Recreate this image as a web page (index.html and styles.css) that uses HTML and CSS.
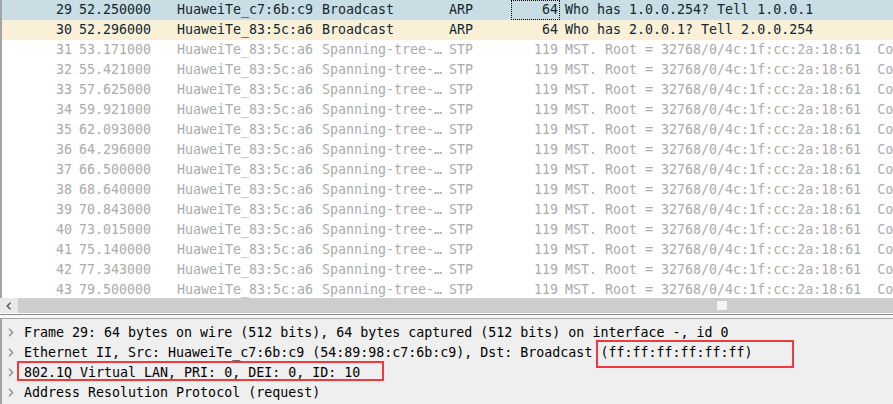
FILE: index.html
```html
<!DOCTYPE html>
<html>
<head>
<meta charset="utf-8">
<link rel="stylesheet" href="styles.css">
</head>
<body>
<div class="app">
  <div class="list">
    <div class="row sel"><span class="c no">29</span><span class="c tm">52.250000</span><span class="c src">HuaweiTe_c7:6b:c9</span><span class="c dst">Broadcast</span><span class="c pr">ARP</span><span class="c len focus">64</span><span class="c info">Who has 1.0.0.254? Tell 1.0.0.1</span></div>
    <div class="row arp"><span class="c no">30</span><span class="c tm">52.296000</span><span class="c src">HuaweiTe_83:5c:a6</span><span class="c dst">Broadcast</span><span class="c pr">ARP</span><span class="c len">64</span><span class="c info">Who has 2.0.0.1? Tell 2.0.0.254</span></div>
    <div class="row dim"><span class="c no">31</span><span class="c tm">53.171000</span><span class="c src">HuaweiTe_83:5c:a6</span><span class="c dst">Spanning-tree-…</span><span class="c pr">STP</span><span class="c len">119</span><span class="c info">MST. Root = 32768/0/4c:1f:cc:2a:18:61  Cost = 0  Port = 0x8001</span></div>
    <div class="row dim"><span class="c no">32</span><span class="c tm">55.421000</span><span class="c src">HuaweiTe_83:5c:a6</span><span class="c dst">Spanning-tree-…</span><span class="c pr">STP</span><span class="c len">119</span><span class="c info">MST. Root = 32768/0/4c:1f:cc:2a:18:61  Cost = 0  Port = 0x8001</span></div>
    <div class="row dim"><span class="c no">33</span><span class="c tm">57.625000</span><span class="c src">HuaweiTe_83:5c:a6</span><span class="c dst">Spanning-tree-…</span><span class="c pr">STP</span><span class="c len">119</span><span class="c info">MST. Root = 32768/0/4c:1f:cc:2a:18:61  Cost = 0  Port = 0x8001</span></div>
    <div class="row dim"><span class="c no">34</span><span class="c tm">59.921000</span><span class="c src">HuaweiTe_83:5c:a6</span><span class="c dst">Spanning-tree-…</span><span class="c pr">STP</span><span class="c len">119</span><span class="c info">MST. Root = 32768/0/4c:1f:cc:2a:18:61  Cost = 0  Port = 0x8001</span></div>
    <div class="row dim"><span class="c no">35</span><span class="c tm">62.093000</span><span class="c src">HuaweiTe_83:5c:a6</span><span class="c dst">Spanning-tree-…</span><span class="c pr">STP</span><span class="c len">119</span><span class="c info">MST. Root = 32768/0/4c:1f:cc:2a:18:61  Cost = 0  Port = 0x8001</span></div>
    <div class="row dim"><span class="c no">36</span><span class="c tm">64.296000</span><span class="c src">HuaweiTe_83:5c:a6</span><span class="c dst">Spanning-tree-…</span><span class="c pr">STP</span><span class="c len">119</span><span class="c info">MST. Root = 32768/0/4c:1f:cc:2a:18:61  Cost = 0  Port = 0x8001</span></div>
    <div class="row dim"><span class="c no">37</span><span class="c tm">66.500000</span><span class="c src">HuaweiTe_83:5c:a6</span><span class="c dst">Spanning-tree-…</span><span class="c pr">STP</span><span class="c len">119</span><span class="c info">MST. Root = 32768/0/4c:1f:cc:2a:18:61  Cost = 0  Port = 0x8001</span></div>
    <div class="row dim"><span class="c no">38</span><span class="c tm">68.640000</span><span class="c src">HuaweiTe_83:5c:a6</span><span class="c dst">Spanning-tree-…</span><span class="c pr">STP</span><span class="c len">119</span><span class="c info">MST. Root = 32768/0/4c:1f:cc:2a:18:61  Cost = 0  Port = 0x8001</span></div>
    <div class="row dim"><span class="c no">39</span><span class="c tm">70.843000</span><span class="c src">HuaweiTe_83:5c:a6</span><span class="c dst">Spanning-tree-…</span><span class="c pr">STP</span><span class="c len">119</span><span class="c info">MST. Root = 32768/0/4c:1f:cc:2a:18:61  Cost = 0  Port = 0x8001</span></div>
    <div class="row dim"><span class="c no">40</span><span class="c tm">73.015000</span><span class="c src">HuaweiTe_83:5c:a6</span><span class="c dst">Spanning-tree-…</span><span class="c pr">STP</span><span class="c len">119</span><span class="c info">MST. Root = 32768/0/4c:1f:cc:2a:18:61  Cost = 0  Port = 0x8001</span></div>
    <div class="row dim"><span class="c no">41</span><span class="c tm">75.140000</span><span class="c src">HuaweiTe_83:5c:a6</span><span class="c dst">Spanning-tree-…</span><span class="c pr">STP</span><span class="c len">119</span><span class="c info">MST. Root = 32768/0/4c:1f:cc:2a:18:61  Cost = 0  Port = 0x8001</span></div>
    <div class="row dim"><span class="c no">42</span><span class="c tm">77.343000</span><span class="c src">HuaweiTe_83:5c:a6</span><span class="c dst">Spanning-tree-…</span><span class="c pr">STP</span><span class="c len">119</span><span class="c info">MST. Root = 32768/0/4c:1f:cc:2a:18:61  Cost = 0  Port = 0x8001</span></div>
    <div class="row dim"><span class="c no">43</span><span class="c tm">79.500000</span><span class="c src">HuaweiTe_83:5c:a6</span><span class="c dst">Spanning-tree-…</span><span class="c pr">STP</span><span class="c len">119</span><span class="c info">MST. Root = 32768/0/4c:1f:cc:2a:18:61  Cost = 0  Port = 0x8001</span></div>
  </div>
  <div class="hscroll">
    <div class="sbtn"><svg width="6" height="8" viewBox="0 0 6 8"><polyline points="4.5,0.8 1.2,4 4.5,7.2" fill="none" stroke="#555" stroke-width="1.4"/></svg></div>
    <div class="track"><span class="nub"></span></div>
  </div>
  <div class="sep"></div>
  <div class="details">
    <div class="drow"><svg class="chev" width="6" height="9" viewBox="0 0 6 9"><polyline points="1,0.8 4.6,4.5 1,8.2" fill="none" stroke="#8a8a8a" stroke-width="1.3"/></svg><span class="dtext">Frame 29: 64 bytes on wire (512 bits), 64 bytes captured (512 bits) on interface -, id 0</span></div>
    <div class="drow"><svg class="chev" width="6" height="9" viewBox="0 0 6 9"><polyline points="1,0.8 4.6,4.5 1,8.2" fill="none" stroke="#8a8a8a" stroke-width="1.3"/></svg><span class="dtext">Ethernet II, Src: HuaweiTe_c7:6b:c9 (54:89:98:c7:6b:c9), Dst: Broadcast (ff:ff:ff:ff:ff:ff)</span></div>
    <div class="drow"><svg class="chev" width="6" height="9" viewBox="0 0 6 9"><polyline points="1,0.8 4.6,4.5 1,8.2" fill="none" stroke="#8a8a8a" stroke-width="1.3"/></svg><span class="dtext">802.1Q Virtual LAN, PRI: 0, DEI: 0, ID: 10</span></div>
    <div class="drow"><svg class="chev" width="6" height="9" viewBox="0 0 6 9"><polyline points="1,0.8 4.6,4.5 1,8.2" fill="none" stroke="#8a8a8a" stroke-width="1.3"/></svg><span class="dtext">Address Resolution Protocol (request)</span></div>
    <div class="mark mark-vlan"></div>
    <div class="mark mark-dst"></div>
  </div>
</div>
</body>
</html>
```

FILE: styles.css
```css
html, body {
  margin: 0;
  padding: 0;
  background: #ffffff;
}

body {
  font-family: "DejaVu Sans Mono", "Liberation Mono", monospace;
  font-size: 13.3px;
  color: #12272e;
}

.app {
  width: 893px;
  height: 404px;
  overflow: hidden;
  display: flex;
  flex-direction: column;
}

.list {
  height: 298px;
  flex: none;
  overflow: hidden;
  border-left: 2px solid #a3a3a3;
  background: #ffffff;
}

.row {
  display: grid;
  grid-template-columns: 74px 97px 145px 127px 66px 49px minmax(0, 1fr);
  height: 20px;
  line-height: 19px;
  white-space: pre;
}

.c {
  overflow: hidden;
  display: block;
}

.no { text-align: right; padding-right: 4px; }
.tm { padding-left: 3px; }
.src { padding-left: 4px; }
.dst { padding-left: 4px; }
.pr { padding-left: 4px; }
.len { text-align: right; padding-right: 2px; }
.info { padding-left: 5px; }

.sel {
  background: #c9dde5;
  color: #12272e;
}

.arp {
  background: #faf0d7;
  color: #12272e;
}

.dim {
  color: #ababab;
}

.focus {
  outline: 1px dotted #000000;
  outline-offset: -1px;
}

.hscroll {
  height: 15px;
  flex: none;
  display: flex;
  background: #cdcdcd;
}

.sbtn {
  width: 18px;
  background: #e9e9e9;
  display: flex;
  align-items: center;
  justify-content: center;
}

.track {
  flex: 1;
}

.nub {
  display: block;
  width: 10px;
  height: 9px;
  margin-left: 699px;
  margin-top: 3px;
  background: #f4f4f4;
}

.sep {
  flex: none;
  box-sizing: border-box;
  height: 5px;
  margin-top: 1px;
  border-top: 1px solid #8c8c8c;
  border-bottom: 1px solid #a6a6a6;
  background: #f9f9f9;
}

.details {
  flex: 1;
  position: relative;
  background: #efefef;
  border-left: 2px solid #a3a3a3;
  padding-top: 3px;
  color: #000000;
}

.drow {
  height: 20px;
  line-height: 19px;
  display: flex;
  align-items: center;
  white-space: pre;
}

.chev {
  flex: none;
  margin-left: 6px;
  margin-right: 10px;
}

.mark {
  position: absolute;
  box-sizing: border-box;
  border: 2px solid #f03a3a;
}

.mark-vlan {
  left: 15px;
  top: 42px;
  width: 367px;
  height: 20px;
}

.mark-dst {
  left: 594px;
  top: 21px;
  width: 198px;
  height: 28px;
}
```
